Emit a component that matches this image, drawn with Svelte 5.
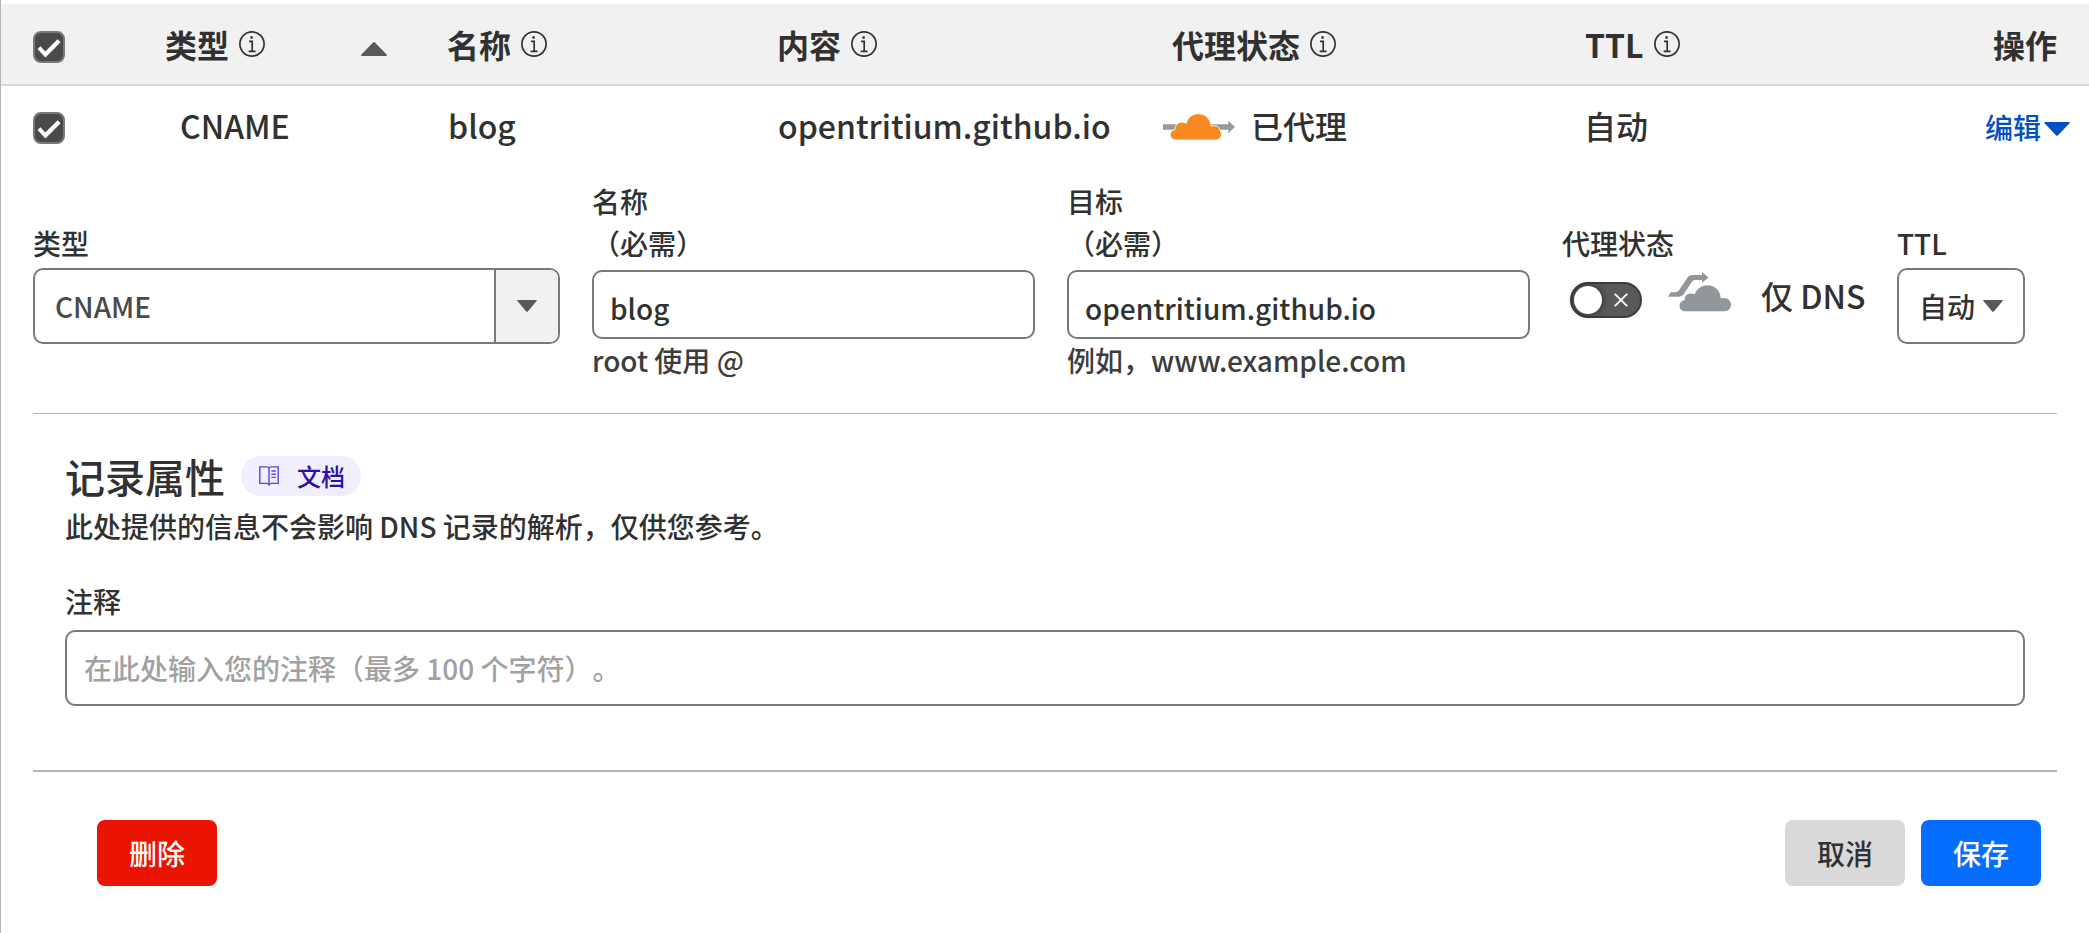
<script>
  const columns = [
    { label: '类型', info: true, sort: true },
    { label: '名称', info: true },
    { label: '内容', info: true },
    { label: '代理状态', info: true },
    { label: 'TTL', info: true },
    { label: '操作', end: true }
  ];
</script>

{#snippet checkbox()}
  <span class="checkbox" role="checkbox" aria-checked="true" aria-label="选择" tabindex="0">
    <svg width="28" height="28" viewBox="0 0 28 28"><path d="M2.5 16 L5.5 13.3 L10.2 18.4 L22.6 6.2 L25.6 9.2 L10.4 24.6 Z" fill="#fff" /></svg>
  </span>
{/snippet}

{#snippet info()}
  <svg class="info" width="26" height="26" viewBox="0 0 26 26">
    <circle cx="13" cy="13" r="12.1" fill="none" stroke="#313131" stroke-width="1.7" />
    <rect x="11.4" y="5.3" width="2.4" height="2.4" fill="#313131" />
    <path d="M10 10.3H13.2V20.3M9.6 20.3H16.6" fill="none" stroke="#313131" stroke-width="1.7" />
  </svg>
{/snippet}

{#snippet down(w, h, color)}
  <svg width={w} height={h} viewBox="0 0 20 12" preserveAspectRatio="none"><path d="M.8 0H19.2Q20.3 0 19.6 1L10.8 11.4Q10 12.3 9.2 11.4L.4 1Q-.3 0 .8 0Z" fill={color} /></svg>
{/snippet}

<main>
  <div class="grid head">
    <div class="check">{@render checkbox()}</div>
    {#each columns as col}
      <div class="cell" class:end={col.end}>
        <span>{col.label}</span>
        {#if col.info}{@render info()}{/if}
        {#if col.sort}
          <svg class="sort" width="26" height="14" viewBox="0 0 26 14"><path d="M12.1.5Q13-.4 13.9.5L25.4 12.3Q26.6 14 25 14H1Q-.6 14 .6 12.3Z" fill="#595959" /></svg>
        {/if}
      </div>
    {/each}
  </div>

  <div class="grid row">
    <div class="check">{@render checkbox()}</div>
    <div class="cell type">CNAME</div>
    <div class="cell latin">blog</div>
    <div class="cell latin">opentritium.github.io</div>
    <div class="cell proxied">
      <svg width="72" height="32" viewBox="0 0 72 32">
        <path d="M0 15.3H65.3V11.7L72 18L65.3 24.3V20.7H0Z" fill="#999" />
        <path d="M13 31C6 31 5 22 12 20.5C12 14 18 11.5 23.2 14.2C24.5 8.6 29.5 4.7 35.3 4.7C42.5 4.7 47.6 10 48 17.3C53 15.4 57 18 57 21.6C60.2 25.8 57.8 31 52.8 31Z" fill="#f6891f" stroke="#fff" stroke-width=".8" />
      </svg>
      <span>已代理</span>
    </div>
    <div class="cell ttl">自动</div>
    <div class="cell edit"><span>编辑</span>{@render down(26, 14, '#0051c3')}</div>
  </div>

  <section class="form">
    <div class="field single">
      <span class="label">类型</span>
      <div class="select wide">
        <span>CNAME</span>
        <i>{@render down(20, 12, '#595959')}</i>
      </div>
    </div>
    <div class="field">
      <span class="label">名称</span>
      <span class="label">（必需）</span>
      <div class="input">blog</div>
      <span class="hint">root 使用 @</span>
    </div>
    <div class="field">
      <span class="label">目标</span>
      <span class="label">（必需）</span>
      <div class="input">opentritium.github.io</div>
      <span class="hint">例如，www.example.com</span>
    </div>
    <div class="field single">
      <span class="label">代理状态</span>
      <div class="proxy">
        <div class="toggle">
          <b></b>
          <svg width="14" height="14" viewBox="0 0 14 14"><path d="M.8.8L13.2 13.2M13.2.8L.8 13.2" stroke="#fff" stroke-width="1.9" /></svg>
        </div>
        <svg class="cloud" width="64" height="42" viewBox="0 0 64 42">
          <path d="M0 24.7L2.6 20.3H7.5Q9.5 20.3 10.8 18.5L19 6.3Q21 3 24.5 3H34V0L40.5 5.4L34 10.7V8H27Q25 8 23.7 10L16.4 21.3Q14.4 24.7 10.8 24.7Z" fill="#92979b" />
          <path d="M17.5 39.3C9.8 39.3 9.8 29 17 28C15.8 22.3 21.8 20 26.8 22.2C29 16.2 34 13.3 39.7 13.3C47 13.3 52.4 18.8 52.7 26.4C58.5 24.9 63 28.2 63 32.6C63 36.6 60 39.3 56.5 39.3Z" fill="#92979b" />
        </svg>
        <span>仅 DNS</span>
      </div>
    </div>
    <div class="field single">
      <span class="label">TTL</span>
      <div class="select small"><span>自动</span>{@render down(20, 12, '#595959')}</div>
    </div>
  </section>

  <section class="attributes">
    <div class="title">
      <h2>记录属性</h2>
      <span class="badge">
        <svg width="20" height="20" viewBox="0 0 20 20" fill="none" stroke="#5a46dc" stroke-width="1.4">
          <path d="M10 2.4Q9.3 .9 7.8 .9H.8V17.4H7.6Q9 17.4 10 18.9Q11 17.4 12.4 17.4H19.2V.9H12.2Q10.7 .9 10 2.4V18.9M12.4 5H16.8M12.4 8.2H16.8M12.4 11.4H16.8" />
        </svg>
        <span>文档</span>
      </span>
    </div>
    <p>此处提供的信息不会影响 DNS 记录的解析，仅供您参考。</p>
    <span class="label note">注释</span>
    <div class="input comment">在此处输入您的注释（最多 100 个字符）。</div>
  </section>

  <footer>
    <button class="delete">删除</button>
    <button class="cancel">取消</button>
    <button class="save">保存</button>
  </footer>
</main>

<style>
  :global(body) { margin: 0; background: #fff; }
  main {
    box-sizing: border-box;
    width: 2089px;
    height: 933px;
    padding-top: 4px;
    border-left: 1px solid #b6b6b6;
    overflow: hidden;
    color: #313131;
    font: 500 28px/42px "Noto Sans CJK SC", sans-serif;
    text-spacing-trim: space-all;
    white-space: nowrap;
  }
  svg { display: block; flex: none; }
  .grid {
    display: grid;
    grid-template-columns: 132px 282px 330px 395px 413px 366px 1fr;
    padding-left: 32px;
    align-items: center;
    font-size: 32px;
    line-height: 48px;
  }
  .head { height: 80px; border-bottom: 2px solid #d9d9d9; background: #f1f1f1; font-weight: 700; }
  .row { height: 78px; }
  .cell { display: flex; align-items: center; }
  .end { justify-content: flex-end; padding-right: 32px; }
  .info { margin-left: 10px; }
  .sort { margin: 10px 0 0 96px; }
  .checkbox {
    display: block;
    box-sizing: border-box;
    width: 32px;
    height: 32px;
    margin-top: 6px;
    border: 2px solid #797979;
    border-radius: 8px;
    background: #4a4a4a;
  }
  .type { padding-left: 15px; }
  .latin { padding-left: 1px; }
  .proxied { margin-left: -9px; gap: 16px; }
  .ttl { margin-left: -1px; }
  .edit { gap: 3px; padding: 3px 19px 0 0; justify-content: flex-end; color: #0051c3; font-size: 28px; }
  .edit svg { margin-top: 4px; }
  .form {
    display: grid;
    grid-template-columns: 527px 443px 463px 303px 128px;
    column-gap: 32px;
    margin: 0 32px;
    padding: 16px 0 32px;
    border-bottom: 1px solid #b6b6b6;
  }
  .field { display: flex; flex-direction: column; }
  .single { padding-top: 42px; }
  .label { height: 42px; }
  .select, .input {
    display: flex;
    box-sizing: border-box;
    align-items: center;
    border: 2px solid #797979;
    border-radius: 10px;
    background: #fff;
  }
  .select { height: 76px; margin-top: 4px; }
  .wide { padding-left: 20px; justify-content: space-between; color: #4a4a4a; overflow: hidden; }
  .wide i {
    display: flex;
    width: 62px;
    height: 100%;
    align-items: center;
    justify-content: center;
    border-left: 2px solid #797979;
    background: #f1f1f1;
  }
  .small { padding-left: 20px; gap: 8px; }
  .input { height: 69px; margin-top: 6px; padding: 6px 16px 0; }
  .hint { color: #3d3d3d; }
  .proxy { display: flex; height: 62px; align-items: center; padding-left: 8px; font-size: 32px; }
  .toggle {
    display: flex;
    flex: none;
    box-sizing: border-box;
    width: 72px;
    height: 36px;
    margin-top: 10px;
    padding-right: 12px;
    align-items: center;
    justify-content: space-between;
    border: 2px solid #3d3d3d;
    border-radius: 18px;
    background: #595959;
  }
  .toggle b { width: 28px; height: 28px; margin-left: 2px; border-radius: 50%; background: #fff; box-shadow: 0 0 6px #222; }
  .cloud { margin: -4px 29px 0 26px; }
  .attributes { padding: 32px 64px 64px; }
  .title { display: flex; height: 60px; align-items: center; gap: 16px; }
  h2 { margin: 0; font-size: 40px; line-height: 60px; font-weight: 500; }
  .badge {
    display: flex;
    box-sizing: border-box;
    height: 40px;
    padding: 0 16px 0 18px;
    align-items: center;
    gap: 18px;
    border-radius: 20px;
    background: #f1eefd;
    color: #2c0fa3;
    font-size: 24px;
    line-height: 40px;
  }
  p { margin: -1px 0 33px; }
  .note { display: block; }
  .comment { height: 76px; margin-top: 8px; padding: 0 17px; color: #a1a1a1; }
  footer {
    display: flex;
    gap: 16px;
    margin: 0 32px;
    padding: 48px 16px 0 64px;
    border-top: 2px solid #b6b6b6;
  }
  button {
    width: 120px;
    height: 66px;
    padding: 0;
    border: 0;
    border-radius: 8px;
    font: inherit;
  }
  .delete { margin-right: auto; background: #eb1400; color: #fff; }
  .cancel { background: #d9d9d9; color: #313131; }
  .save { background: #056dff; color: #fff; }
</style>
